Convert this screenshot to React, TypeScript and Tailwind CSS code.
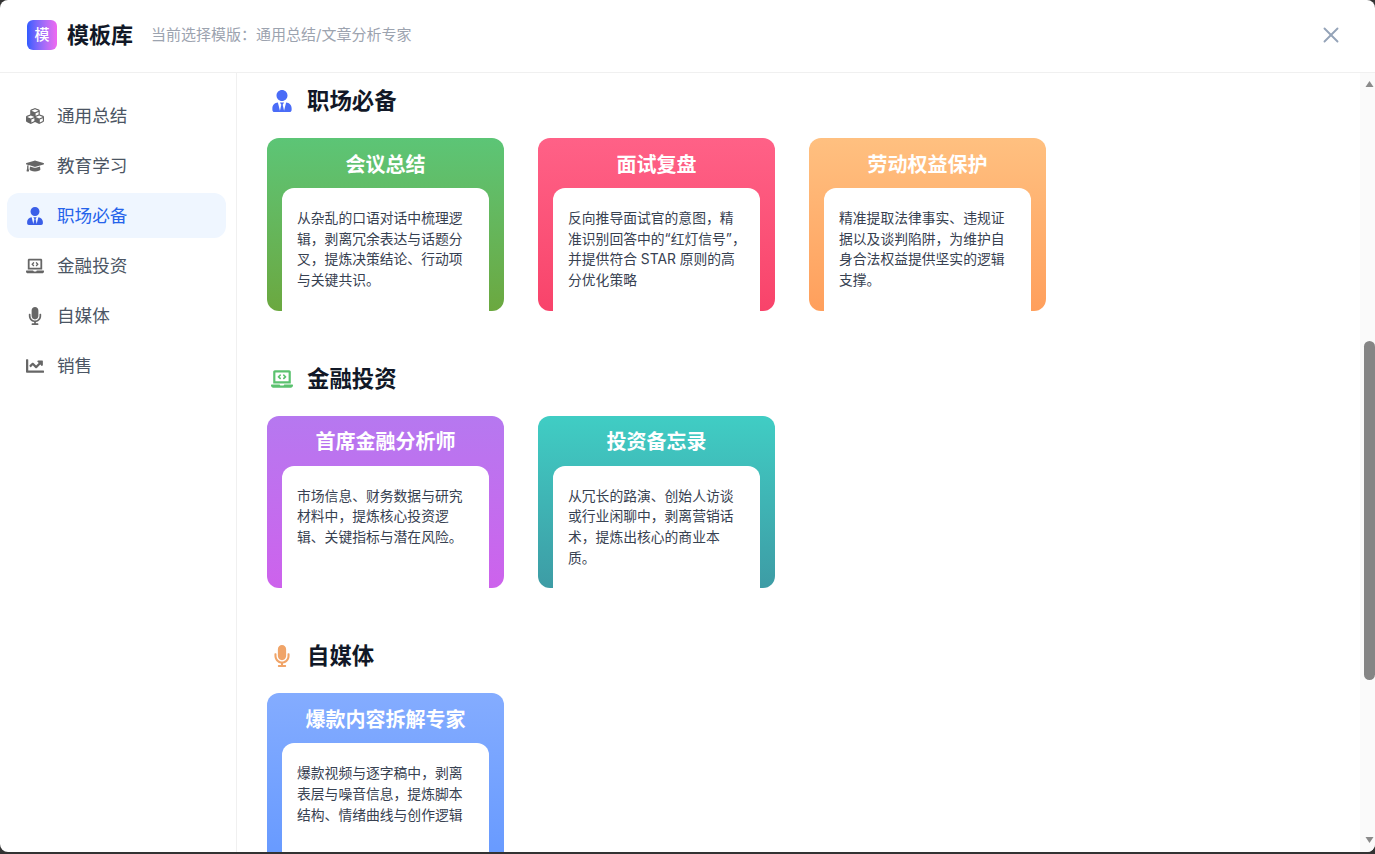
import { X } from 'lucide-react'
import { FaChartLine, FaCubes, FaGraduationCap, FaLaptopCode, FaMicrophone, FaUserTie } from 'react-icons/fa'

const font = 'font-["Inter","Noto_Sans_CJK_SC",sans-serif]'

const navItems = [
  { name: '通用总结', icon: FaCubes },
  { name: '教育学习', icon: FaGraduationCap },
  { name: '职场必备', icon: FaUserTie, active: true },
  { name: '金融投资', icon: FaLaptopCode },
  { name: '自媒体', icon: FaMicrophone },
  { name: '销售', icon: FaChartLine },
]

const sections = [
  {
    title: '职场必备',
    icon: FaUserTie,
    iconColor: 'text-[#4a6cf7]',
    cards: [
      {
        title: '会议总结',
        gradient: 'from-[#5cc576] to-[#6ba83f]',
        text: '从杂乱的口语对话中梳理逻辑，剥离冗余表达与话题分叉，提炼决策结论、行动项与关键共识。',
      },
      {
        title: '面试复盘',
        gradient: 'from-[#ff6187] to-[#f8436a]',
        text: '反向推导面试官的意图，精准识别回答中的“红灯信号”，并提供符合 STAR 原则的高分优化策略',
      },
      {
        title: '劳动权益保护',
        gradient: 'from-[#ffc080] to-[#ff9f5c]',
        text: '精准提取法律事实、违规证据以及谈判陷阱，为维护自身合法权益提供坚实的逻辑支撑。',
      },
    ],
  },
  {
    title: '金融投资',
    icon: FaLaptopCode,
    iconColor: 'text-[#5bc26f]',
    cards: [
      {
        title: '首席金融分析师',
        gradient: 'from-[#b678f0] to-[#cd62ec]',
        text: '市场信息、财务数据与研究材料中，提炼核心投资逻辑、关键指标与潜在风险。',
      },
      {
        title: '投资备忘录',
        gradient: 'from-[#40cdc4] to-[#3d9ca5]',
        text: '从冗长的路演、创始人访谈或行业闲聊中，剥离营销话术，提炼出核心的商业本质。',
      },
    ],
  },
  {
    title: '自媒体',
    icon: FaMicrophone,
    iconColor: 'text-[#f0a468]',
    cards: [
      {
        title: '爆款内容拆解专家',
        gradient: 'from-[#84acff] to-[#6699ff]',
        text: '爆款视频与逐字稿中，剥离表层与噪音信息，提炼脚本结构、情绪曲线与创作逻辑',
      },
    ],
  },
]

export default function App() {
  return (
    <div className={`h-[854px] w-[1375px] overflow-hidden bg-[#333333] ${font}`}>
      <div className="flex h-[852px] flex-col overflow-hidden rounded-lg bg-white">
        <header className="flex h-[73px] shrink-0 items-center border-b border-[#f0f0f0] pb-[2px] pl-[27px] pr-[31px]">
          <div className="flex h-[30px] w-[30px] items-center justify-center rounded-md bg-gradient-to-r from-[#2f5bff] to-[#f069f0] text-[15px] font-medium text-white">
            模
          </div>
          <h1 className="ml-[10px] text-[22px] font-bold text-[#111827]">模板库</h1>
          <span className="ml-[18px] text-[15px] text-[#9ca3af]">当前选择模版：通用总结/文章分析专家</span>
          <X className="ml-auto text-[#94a3b8]" size={26} strokeWidth={1.75} />
        </header>

        <div className="flex min-h-0 flex-1">
          <aside className="flex w-[237px] shrink-0 flex-col gap-[5px] border-r border-[#f0f0f0] pl-[7px] pr-[10px] pt-[20px]">
            {navItems.map((item) => (
              <div
                key={item.name}
                className={
                  item.active
                    ? 'flex h-[45px] items-center rounded-xl bg-[#eff6ff] pl-[19px] text-[17.6px] text-[#2563eb]'
                    : 'flex h-[45px] items-center rounded-xl pl-[19px] text-[17.6px] text-[#4b5563]'
                }
              >
                <span
                  className={
                    item.active
                      ? 'mr-[13px] flex w-[18px] justify-center text-[#3b5fe8]'
                      : 'mr-[13px] flex w-[18px] justify-center text-[#666666]'
                  }
                >
                  <item.icon size={18} />
                </span>
                <span className="pt-[1px]">{item.name}</span>
              </div>
            ))}
          </aside>

          <main className="min-w-0 flex-1 overflow-hidden pl-[30px] pt-[11px]">
            {sections.map((section) => (
              <section key={section.title} className="mb-[50.9px]">
                <div className="mb-[20px] flex h-[34px] items-center">
                  <span className={`flex w-[30px] justify-center ${section.iconColor}`}>
                    <section.icon size={22} />
                  </span>
                  <h2 className="ml-[10px] text-[22.4px] font-bold text-[#111827]">{section.title}</h2>
                </div>
                <div className="flex gap-[34px]">
                  {section.cards.map((card) => (
                    <div
                      key={card.title}
                      className={`flex h-[172.7px] w-[237px] flex-col overflow-hidden rounded-xl bg-gradient-to-b ${card.gradient}`}
                    >
                      <h3 className="flex h-[50px] shrink-0 items-center justify-center pt-[3px] text-[20px] font-bold text-white">
                        {card.title}
                      </h3>
                      <p className="mx-[15px] flex-1 rounded-t-xl bg-white pl-[15px] pr-[14px] pt-[20px] text-[13.8px] leading-[20.7px] text-[#374151]">
                        {card.text}
                      </p>
                    </div>
                  ))}
                </div>
              </section>
            ))}
          </main>

          <div className="flex w-[15px] shrink-0 flex-col items-end bg-[#fafafa]">
            <svg className="ml-[5px] mt-[7px] self-start" width="9" height="8" viewBox="0 0 9 8">
              <path d="M4.5 1 L8.5 7 H0.5 Z" fill="#8a8a8a" />
            </svg>
            <div className="mt-[253px] h-[339px] w-[11px] rounded-full bg-[#858585]" />
            <svg className="ml-[5px] mt-[156px] self-start" width="9" height="8" viewBox="0 0 9 8">
              <path d="M0.5 1 H8.5 L4.5 7 Z" fill="#8a8a8a" />
            </svg>
          </div>
        </div>
      </div>
    </div>
  )
}
